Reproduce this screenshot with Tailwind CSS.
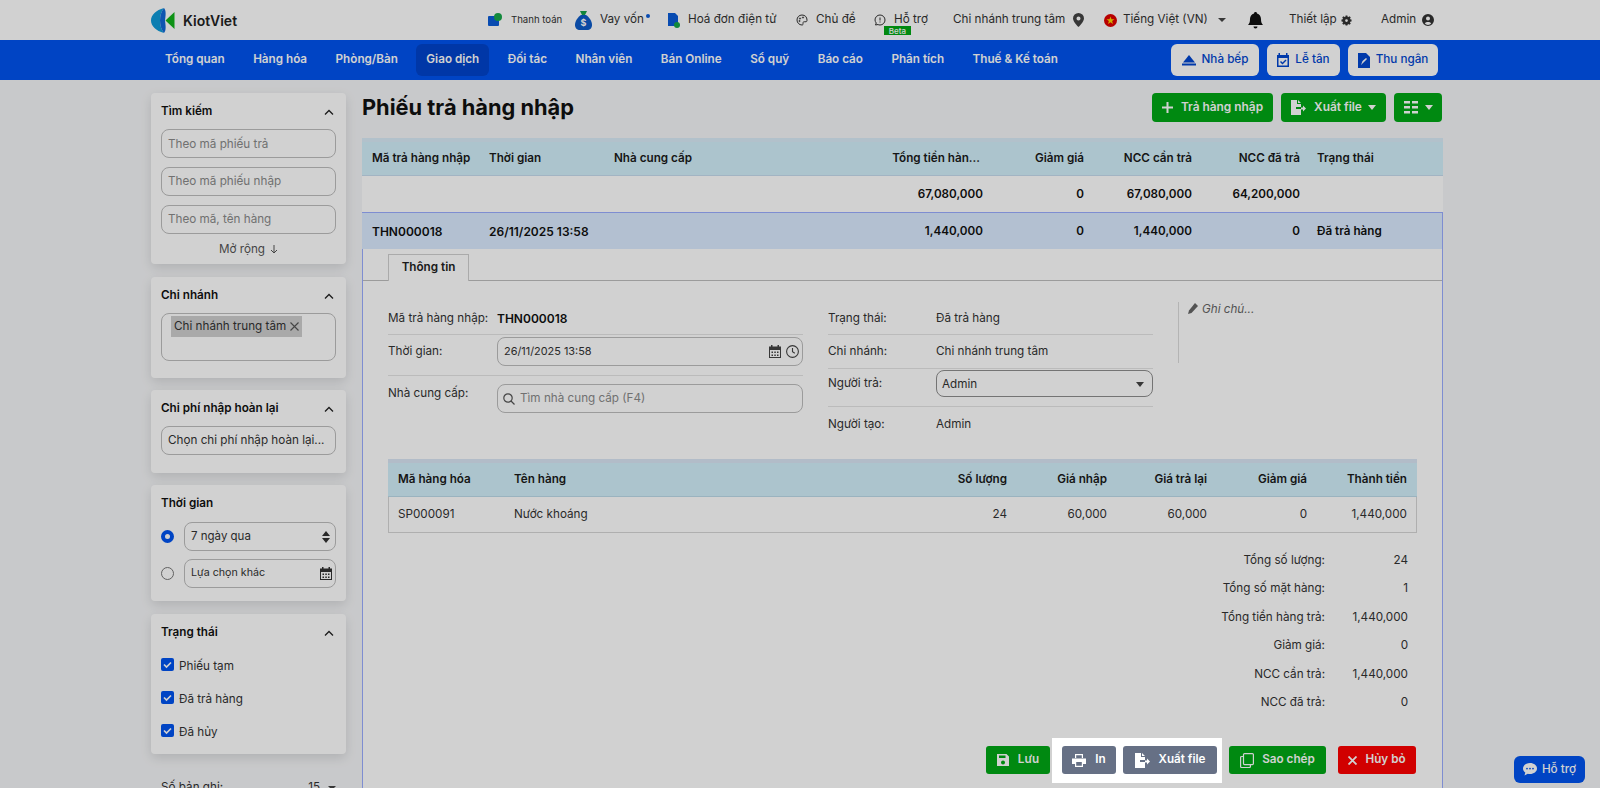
<!DOCTYPE html>
<html lang="vi">
<head>
<meta charset="utf-8">
<title>Phiếu trả hàng nhập</title>
<script src="https://cdn.jsdelivr.net/npm/@tailwindcss/browser@4"></script>
</head>
<body class="h-[788px] overflow-hidden bg-[#f5f6f8] font-['Inter','Liberation_Sans',sans-serif] text-[11.7px] text-[#222]">

<header class="flex h-10 items-center bg-white pl-[151px] text-[11.7px] text-[#333]">
  <svg class="h-[25px] w-[24px]" viewBox="0 0 24 25"><path d="M13 0C5 2 0 7 0 12.500S5 23 13 25c-2.500-3-4-7.500-4-12.500S10.500 3 13 0z" fill="#0f9ad8"/><path d="M13 0c2.500 3 1.500 8 1 12.500 .5 4.500 1.500 9.500-1 12.500-2.500-3-4-7.500-4-12.500S10.500 3 13 0z" fill="#1268d8"/><path d="M23.500 4v17L14.500 12.500z" fill="#12b31c"/></svg>
  <span class="ml-2 w-[56px] text-[14px] font-semibold text-[#222]">KiotViet</span>
  <svg class="ml-[249px] h-[14px] w-[14px]" viewBox="0 0 14 14"><rect x="0" y="3" width="11" height="10" rx="1" fill="#0a5cd8"/><circle cx="10" cy="4" r="4" fill="#17a84a"/></svg>
  <span class="ml-[9px] w-[50px] whitespace-nowrap text-[9.6px]">Thanh toán</span>
  <svg class="ml-[14px] h-[20px] w-[17px]" viewBox="0 0 17 20"><path d="M5 1h7l-2 4H7z" fill="#16a34a"/><path d="M6 5h5c3 2 6 6 6 10 0 3-2 5-5 5H5c-3 0-5-2-5-5 0-4 3-8 6-10z" fill="#0d5bc8"/><text x="8.500" y="16" text-anchor="middle" font-size="9" font-weight="700" fill="#fff">$</text></svg>
  <span class="ml-2 w-[44px] whitespace-nowrap">Vay vốn</span>
  <span class="mb-2 ml-[2px] h-1 w-1 rounded-full bg-[#0a5cd8]"></span>
  <svg class="ml-[17px] h-[15px] w-[13px]" viewBox="0 0 13 15"><path d="M1 0h7l3 3v10H1z" fill="#0a5cd8"/><circle cx="10" cy="12" r="3" fill="#17a84a"/></svg>
  <span class="ml-2 w-[88px] whitespace-nowrap">Hoá đơn điện tử</span>
  <svg class="ml-[20px] h-[12px] w-[12px]" viewBox="0 0 24 24" fill="none" stroke="#333" stroke-width="2"><path d="M12 2C6 2 2 6.500 2 12s4.500 10 10 10c2 0 2.500-1.500 2-3-.5-2 .5-3.500 2.500-3.500H20c1.500 0 2-1.500 2-3.500C22 6 18 2 12 2z"/><circle cx="8" cy="9" r="1.200"/><circle cx="14" cy="7" r="1.200"/><circle cx="7" cy="14" r="1.200"/></svg>
  <span class="ml-2 w-[39px] whitespace-nowrap">Chủ đề</span>
  <svg class="ml-[19px] h-[12px] w-[12px]" viewBox="0 0 24 24" fill="none" stroke="#333" stroke-width="2"><path d="M12 2a10 10 0 0 1 0 20c-2 0-3-.5-4-1l-5 1 1.500-4C3 16 2 14 2 12A10 10 0 0 1 12 2z"/><path d="M12 7v6M12 15v2"/></svg>
  <span class="relative ml-2 w-[35px] whitespace-nowrap">Hỗ trợ<span class="absolute left-[-10px] top-[15px] flex h-[9px] w-[27px] items-center justify-center bg-[#00a815] text-[8px] font-medium text-white">Beta</span></span>
  <span class="ml-[24px] w-[112px] whitespace-nowrap">Chi nhánh trung tâm</span>
  <svg class="ml-2 h-[14px] w-[11px]" viewBox="0 0 11 14"><path fill-rule="evenodd" d="M5.500 0A5.500 5.500 0 0 1 11 5.500C11 9 5.500 14 5.500 14S0 9 0 5.500A5.500 5.500 0 0 1 5.500 0zm0 3.500a2 2 0 1 0 0 4 2 2 0 0 0 0-4z" fill="#444"/></svg>
  <svg class="ml-[20px] h-[13px] w-[13px]" viewBox="0 0 13 13"><circle cx="6.500" cy="6.500" r="6.500" fill="#e00000"/><path d="M6.500 2.500l1 2.800h3L8.100 7l.9 3-2.500-1.800L4 10l.9-3-2.400-1.700h3z" fill="#ffd400"/></svg>
  <span class="ml-[6px] w-[84px] whitespace-nowrap">Tiếng Việt (VN)</span>
  <span class="ml-[11px] h-0 w-0 border-x-[4px] border-t-[4px] border-x-transparent border-t-[#444]"></span>
  <svg class="ml-[22px] h-[17px] w-[15px]" viewBox="0 0 15 17"><path d="M7.500 0c1 0 1.500.7 1.500 1.500C11.500 2.200 13 4.500 13 7c0 3 .5 4.500 2 6H0c1.500-1.500 2-3 2-6 0-2.500 1.500-4.800 4-5.500C6 .7 6.500 0 7.500 0zM5.500 14.500h4a2 2 0 0 1-4 0z" fill="#111"/></svg>
  <span class="ml-[26px] w-[47px] whitespace-nowrap">Thiết lập</span>
  <svg class="ml-[5px] h-[11px] w-[11px]" viewBox="0 0 24 24" fill="none" stroke="#333" stroke-width="6"><circle cx="12" cy="12" r="6"/><path stroke-width="4" d="M12 1v4M12 19v4M1 12h4M19 12h4M4 4l3 3M17 17l3 3M4 20l3-3M17 7l3-3"/></svg>
  <span class="ml-[29px] w-[35px] whitespace-nowrap">Admin</span>
  <svg class="ml-[6px] h-[12px] w-[12px]" viewBox="0 0 12 12"><path fill-rule="evenodd" d="M6 0a6 6 0 1 1 0 12A6 6 0 0 1 6 0zm0 2.500a2 2 0 1 0 0 4 2 2 0 0 0 0-4zM2.800 9.300C3.600 10.400 4.700 11 6 11s2.400-.6 3.200-1.700C8.500 8.400 7.400 8 6 8s-2.500.4-3.200 1.300z" fill="#333"/></svg>
</header>

<nav class="flex h-10 items-center gap-[8.5px] bg-[#0054f0] pl-[155px] font-semibold text-white">
  <span class="whitespace-nowrap rounded-md px-[10px] py-2">Tổng quan</span>
  <span class="whitespace-nowrap rounded-md px-[10px] py-2">Hàng hóa</span>
  <span class="whitespace-nowrap rounded-md px-[10px] py-2">Phòng/Bàn</span>
  <span class="flex h-8 items-center whitespace-nowrap rounded-md bg-[#0044cc] px-[10px]">Giao dịch</span>
  <span class="whitespace-nowrap rounded-md px-[10px] py-2">Đối tác</span>
  <span class="whitespace-nowrap rounded-md px-[10px] py-2">Nhân viên</span>
  <span class="whitespace-nowrap rounded-md px-[10px] py-2">Bán Online</span>
  <span class="whitespace-nowrap rounded-md px-[10px] py-2">Sổ quỹ</span>
  <span class="whitespace-nowrap rounded-md px-[10px] py-2">Báo cáo</span>
  <span class="whitespace-nowrap rounded-md px-[10px] py-2">Phân tích</span>
  <span class="whitespace-nowrap rounded-md px-[10px] py-2">Thuế &amp; Kế toán</span>
  <div class="ml-auto mr-[162px] flex gap-2 font-medium text-[#0046d0]">
    <span class="flex h-8 w-[88px] items-center justify-center gap-[6px] rounded-md bg-white">
      <svg class="h-[11px] w-[14px]" viewBox="0 0 14 11" fill="#0046d0"><path d="M7 0l6 7.500H1z"/><rect y="8.500" width="14" height="2"/></svg>Nhà bếp</span>
    <span class="flex h-8 w-[73px] items-center justify-center gap-[6px] rounded-md bg-white">
      <svg class="h-[14px] w-[12px]" viewBox="0 0 12 14" fill="#0046d0"><path fill-rule="evenodd" d="M3 0v2h6V0h1.500v2H12v12H0V2h1.500V0zM1.500 5v7.500h9V5zM8.500 6.500l1 1-4 4-2.500-2.500 1-1 1.500 1.500z"/></svg>Lễ tân</span>
    <span class="flex h-8 w-[90px] items-center justify-center gap-[6px] rounded-md bg-white">
      <svg class="h-[15px] w-[12px]" viewBox="0 0 12 15" fill="#0046d0"><path fill-rule="evenodd" d="M0 0h8l4 4v11H0zM3 12l1.500-4L8 5l1 1-3.500 3.500z"/></svg>Thu ngân</span>
  </div>
</nav>

<div class="flex pl-[151px] pt-[13px]">
  <aside class="w-[195px] shrink-0">
    <section class="h-[171px] rounded-[4px] bg-white px-[10px] pt-[11px] shadow-[0_4px_12px_rgba(0,0,0,0.12)]">
      <div class="flex h-[15px] items-center justify-between pr-[2px] pt-[1px] font-semibold text-[#111]">Tìm kiếm
        <svg class="h-[9px] w-[10px]" viewBox="0 0 10 9" fill="none" stroke="#222" stroke-width="1.300"><path d="M1 6.500l4-4 4 4"/></svg></div>
      <div class="mt-[10px] flex h-[29px] items-center rounded-lg border border-[#bdbdbd] px-[6px] pt-[2px] text-[#8a8a8a]">Theo mã phiếu trả</div>
      <div class="mt-[9px] flex h-[29px] items-center rounded-lg border border-[#bdbdbd] px-[6px] pt-[1px] text-[#8a8a8a]">Theo mã phiếu nhập</div>
      <div class="mt-[9px] flex h-[29px] items-center rounded-lg border border-[#bdbdbd] px-[6px] pt-[1px] text-[#8a8a8a]">Theo mã, tên hàng</div>
      <div class="mt-[7px] flex items-center justify-center gap-[5px] text-[#555]">Mở rộng
        <svg class="h-[9px] w-[8px]" viewBox="0 0 8 9" fill="none" stroke="#555"><path d="M4 0v8M1 5l3 3 3-3"/></svg></div>
    </section>

    <section class="mt-[13px] h-[101px] rounded-[4px] bg-white px-[10px] pt-[11px] shadow-[0_4px_12px_rgba(0,0,0,0.12)]">
      <div class="flex h-[15px] items-center justify-between pr-[2px] pt-[1px] font-semibold text-[#111]">Chi nhánh
        <svg class="h-[9px] w-[10px]" viewBox="0 0 10 9" fill="none" stroke="#222" stroke-width="1.300"><path d="M1 6.500l4-4 4 4"/></svg></div>
      <div class="mt-[10px] h-[48px] rounded-lg border border-[#bdbdbd] pl-[9px] pt-[2px]">
        <span class="inline-flex h-[21px] items-center gap-[4px] bg-[#cfcfcf] px-[3px] text-[#333]">Chi nhánh trung tâm
          <svg class="h-[9px] w-[9px]" viewBox="0 0 9 9" stroke="#555" stroke-width="1.100"><path d="M.5.500l8 8M8.500.500l-8 8"/></svg></span>
      </div>
    </section>

    <section class="mt-[12px] h-[83px] rounded-[4px] bg-white px-[10px] pt-[11px] shadow-[0_4px_12px_rgba(0,0,0,0.12)]">
      <div class="flex h-[15px] items-center justify-between pr-[2px] pt-[1px] font-semibold text-[#111]">Chi phí nhập hoàn lại
        <svg class="h-[9px] w-[10px]" viewBox="0 0 10 9" fill="none" stroke="#222" stroke-width="1.300"><path d="M1 6.500l4-4 4 4"/></svg></div>
      <div class="mt-[10px] flex h-[29px] items-center whitespace-nowrap rounded-lg border border-[#bdbdbd] px-[6px] text-[#333]">Chọn chi phí nhập hoàn lại...</div>
    </section>

    <section class="mt-[12px] h-[116px] rounded-[4px] bg-white px-[10px] pt-[11px] shadow-[0_4px_12px_rgba(0,0,0,0.12)]">
      <div class="flex h-[15px] items-center pt-[1px] font-semibold text-[#111]">Thời gian</div>
      <div class="mt-[11px] flex items-center">
        <span class="h-[13px] w-[13px] rounded-full border-[4px] border-[#0054f0] bg-white"></span>
        <div class="ml-[10px] flex h-[29px] flex-1 items-center justify-between rounded-lg border border-[#bdbdbd] pl-[6px] pr-[5px] text-[#333] text-[11.5px]">7 ngày qua
          <svg class="h-[12px] w-[8px]" viewBox="0 0 8 12" fill="#333"><path d="M4 0l4 5H0zM4 12L0 7h8z"/></svg></div>
      </div>
      <div class="mt-[8px] flex items-center">
        <span class="h-[13px] w-[13px] rounded-full border border-[#777] bg-white"></span>
        <div class="ml-[10px] flex h-[29px] flex-1 items-center justify-between rounded-lg border border-[#bdbdbd] pl-[6px] pr-[3px] text-[#333] text-[10.7px]">Lựa chọn khác
          <svg class="h-[13px] w-[12px]" viewBox="0 0 12 13" fill="#333"><path fill-rule="evenodd" d="M2 0h1.500v1.500h5V0H10v1.500h2V13H0V1.500h2zM1 5v7h10V5zM2.500 6.500h1.500V8H2.500zM5.300 6.500h1.500V8H5.300zM8 6.500h1.500V8H8zM2.500 9.500h1.500V11H2.500zM5.300 9.500h1.500V11H5.300zM8 9.500h1.500V11H8z"/></svg></div>
      </div>
    </section>

    <section class="mt-[13px] h-[140px] rounded-[4px] bg-white px-[10px] pt-[11px] shadow-[0_4px_12px_rgba(0,0,0,0.12)]">
      <div class="flex h-[15px] items-center justify-between pr-[2px] pt-[1px] font-semibold text-[#111]">Trạng thái
        <svg class="h-[9px] w-[10px]" viewBox="0 0 10 9" fill="none" stroke="#222" stroke-width="1.300"><path d="M1 6.500l4-4 4 4"/></svg></div>
      <div class="mt-[17px] flex h-[14px] items-center gap-[5px] text-[#333]">
        <svg class="h-[13px] w-[13px]" viewBox="0 0 13 13"><rect width="13" height="13" rx="2" fill="#0054f0"/><path d="M3 6.500l2.500 2.500 4.500-4.500" fill="none" stroke="#fff" stroke-width="1.700"/></svg><span class="mt-[6px]">Phiếu tạm</span></div>
      <div class="mt-[19px] flex h-[14px] items-center gap-[5px] text-[#333]">
        <svg class="h-[13px] w-[13px]" viewBox="0 0 13 13"><rect width="13" height="13" rx="2" fill="#0054f0"/><path d="M3 6.500l2.500 2.500 4.500-4.500" fill="none" stroke="#fff" stroke-width="1.700"/></svg><span class="mt-[6px]">Đã trả hàng</span></div>
      <div class="mt-[19px] flex h-[14px] items-center gap-[5px] text-[#333]">
        <svg class="h-[13px] w-[13px]" viewBox="0 0 13 13"><rect width="13" height="13" rx="2" fill="#0054f0"/><path d="M3 6.500l2.500 2.500 4.500-4.500" fill="none" stroke="#fff" stroke-width="1.700"/></svg><span class="mt-[6px]">Đã hủy</span></div>
    </section>

    <div class="mt-[25px] flex justify-between px-[10px] text-[#333]">Số bản ghi:<span class="flex items-center gap-2">15<span class="h-0 w-0 border-x-[4px] border-t-[4px] border-x-transparent border-t-[#444]"></span></span></div>
  </aside>

  <main class="ml-4 w-[1081px]">
    <div class="flex h-7 items-center justify-between">
      <h1 class="text-[21.8px] font-bold text-[#111]">Phiếu trả hàng nhập</h1>
      <div class="mr-px flex gap-2 font-semibold text-[11.9px] text-white">
        <span class="flex h-[29px] w-[121px] items-center justify-center gap-2 rounded-[4px] bg-[#00a815]">
          <svg class="h-[11px] w-[11px]" viewBox="0 0 11 11" fill="#fff"><path d="M4.500 0h2v4.500H11v2H6.500V11h-2V6.500H0v-2h4.500z"/></svg>Trả hàng nhập</span>
        <span class="flex h-[29px] w-[105px] items-center justify-center gap-[8px] rounded-[4px] bg-[#00a815]">
          <svg class="h-[15px] w-[15px]" viewBox="0 0 15 15" fill="#fff"><path d="M0 0h6v4h4v3H5v2h5v6H0zM7 0l3 3H7zM10 7.500h2V5.500l3 3-3 3v-2h-2z"/></svg>Xuất file
          <span class="-ml-[2px] h-0 w-0 border-x-[4px] border-t-[5px] border-x-transparent border-t-white"></span></span>
        <span class="flex h-[29px] w-[48px] items-center justify-center gap-[7px] rounded-[4px] bg-[#00a815]">
          <svg class="h-[13px] w-[14px]" viewBox="0 0 14 13" fill="#fff"><path d="M0 0h6v2.500H0zM8 0h6v2.500H8zM0 5h6v2.500H0zM8 5h6v2.500H8zM0 10h6v2.500H0zM8 10h6v2.500H8z"/></svg>
          <span class="h-0 w-0 border-x-[4px] border-t-[5px] border-x-transparent border-t-white"></span></span>
      </div>
    </div>

    <div class="mt-[17px] grid h-[38px] grid-cols-[117px_125px_268px_101px_101px_108px_108px_1fr] items-center border-b border-t-[4px] border-b-[#c6dcee] border-t-[#d9ecf8] bg-[#d2f0fa] pl-[10px] font-semibold text-[#1a1a1a]">
      <span class="whitespace-nowrap">Mã trả hàng nhập</span><span>Thời gian</span><span>Nhà cung cấp</span>
      <span class="whitespace-nowrap pr-[3px] text-right">Tổng tiền hàn...</span><span class="text-right">Giảm giá</span><span class="text-right">NCC cần trả</span><span class="text-right">NCC đã trả</span><span class="pl-[17px]">Trạng thái</span>
    </div>
    <div class="grid h-[36px] grid-cols-[117px_125px_268px_101px_101px_108px_108px_1fr] items-center bg-white pl-[10px] pt-[1px] font-semibold text-[#111]">
      <span></span><span></span><span></span><span class="text-right">67,080,000</span><span class="text-right">0</span><span class="text-right">67,080,000</span><span class="text-right">64,200,000</span><span></span>
    </div>

    <div class="h-[600px] border border-[#9aadff] bg-white">
      <div class="-ml-px grid h-[36px] grid-cols-[117px_125px_268px_101px_101px_108px_108px_1fr] items-center bg-[#dbebff] pl-[10px] pt-[1px] font-semibold text-[#111]">
        <span class="text-[12px]">THN000018</span><span class="whitespace-nowrap text-[12px]">26/11/2025 13:58</span><span></span><span class="text-right">1,440,000</span><span class="text-right">0</span><span class="text-right">1,440,000</span><span class="text-right">0</span><span class="pl-[17px]">Đã trả hàng</span>
      </div>

      <div class="flex h-[32px] items-end border-b border-[#bdbdbd] pl-[25px]">
        <span class="-mb-px flex h-[27px] w-[81px] items-center justify-center border border-b-0 border-[#d0d0d0] bg-white font-semibold text-[#222]">Thông tin</span>
      </div>

      <div class="flex h-[178px] pl-[25px] pt-[21px] text-[#333]">
        <div class="w-[415px]">
          <div class="flex h-[33px] items-center border-b border-[#e4e4e4] pt-[1px]"><span class="w-[109px] whitespace-nowrap">Mã trả hàng nhập:</span><span class="font-semibold text-[12px] text-[#111]">THN000018</span></div>
          <div class="flex h-[41px] items-start border-b border-[#e4e4e4] pt-[2px]"><span class="flex h-[29px] w-[109px] items-center">Thời gian:</span>
            <div class="flex h-[29px] flex-1 items-center justify-between rounded-lg border border-[#bdbdbd] pl-[6px] pr-[3px] text-[10.9px]">26/11/2025 13:58
              <span class="flex items-center gap-[5px]">
                <svg class="h-[13px] w-[12px]" viewBox="0 0 12 13" fill="#444"><path fill-rule="evenodd" d="M2 0h1.500v1.500h5V0H10v1.500h2V13H0V1.500h2zM1 5v7h10V5zM2.500 6.500h1.500V8H2.500zM5.300 6.500h1.500V8H5.300zM8 6.500h1.500V8H8zM2.500 9.500h1.500V11H2.500zM5.300 9.500h1.500V11H5.300zM8 9.500h1.500V11H8z"/></svg>
                <svg class="h-[13px] w-[13px]" viewBox="0 0 13 13" fill="none" stroke="#444" stroke-width="1.100"><circle cx="6.500" cy="6.500" r="5.900"/><path d="M6.500 3v3.700l2.300 1.500"/></svg>
              </span></div>
          </div>
          <div class="flex items-start pt-[8px]"><span class="w-[109px] pt-[1px]">Nhà cung cấp:</span>
            <div class="flex h-[29px] flex-1 items-center gap-[5px] rounded-lg border border-[#bdbdbd] pl-[5px] text-[#8a8a8a] text-[11.7px]">
              <svg class="h-[12px] w-[12px]" viewBox="0 0 12 12" fill="none" stroke="#555" stroke-width="1.200"><circle cx="5" cy="5" r="4.200"/><path d="M8 8l3.500 3.500"/></svg>Tìm nhà cung cấp (F4)</div>
          </div>
        </div>

        <div class="ml-[25px] w-[325px]">
          <div class="flex h-[33px] items-center border-b border-[#e4e4e4] pt-[1px]"><span class="w-[108px]">Trạng thái:</span>Đã trả hàng</div>
          <div class="flex h-[34px] items-center border-b border-[#e4e4e4]"><span class="w-[108px]">Chi nhánh:</span>Chi nhánh trung tâm</div>
          <div class="flex h-[38px] items-start border-b border-[#e4e4e4] pt-[1px]"><span class="flex h-[27px] w-[108px] items-center">Người trả:</span>
            <div class="flex h-[27px] flex-1 items-center justify-between rounded-lg border border-[#8e8e8e] pl-[5px] pr-[8px] pt-[2px]">Admin<span class="h-0 w-0 border-x-[4px] border-t-[5px] border-x-transparent border-t-[#444]"></span></div>
          </div>
          <div class="flex h-[35px] items-center"><span class="w-[108px]">Người tạo:</span>Admin</div>
        </div>

        <div class="ml-[25px] flex h-[61px] items-start gap-[4px] border-l border-[#dcdcdc] pl-[9px] italic leading-[14px] text-[#666]">
          <svg class="mt-[1px] h-[11px] w-[10px]" viewBox="0 0 10 11" fill="#666"><path d="M7 0l3 3-6.500 7L0 11l1-3.500z"/></svg>Ghi chú...</div>
      </div>

      <div class="ml-[25px] w-[1029px] border-b border-x border-[#d6d6d6]">
        <div class="-mx-px grid h-[38px] grid-cols-[116px_1fr_100px_100px_100px_100px_100px] items-center border-b border-t-[4px] border-b-[#bcdbe9] border-t-[#d9e6f5] bg-[#d2f0fa] px-[10px] font-semibold text-[#1a1a1a]">
          <span>Mã hàng hóa</span><span>Tên hàng</span><span class="text-right">Số lượng</span><span class="text-right">Giá nhập</span><span class="text-right">Giá trả lại</span><span class="text-right">Giảm giá</span><span class="text-right">Thành tiền</span>
        </div>
        <div class="grid h-[35px] grid-cols-[116px_1fr_100px_100px_100px_100px_100px] items-center px-[9px] pt-[1px] text-[#333]">
          <span>SP000091</span><span>Nước khoáng</span><span class="text-right">24</span><span class="text-right">60,000</span><span class="text-right">60,000</span><span class="text-right">0</span><span class="text-right">1,440,000</span>
        </div>
      </div>

      <div class="ml-[25px] mt-[13px] w-[1020px] text-[#333]">
        <div class="flex h-[28.6px] items-center justify-end"><span>Tổng số lượng:</span><span class="w-[83px] text-right">24</span></div>
        <div class="flex h-[28.6px] items-center justify-end"><span>Tổng số mặt hàng:</span><span class="w-[83px] text-right">1</span></div>
        <div class="flex h-[28.6px] items-center justify-end"><span>Tổng tiền hàng trả:</span><span class="w-[83px] text-right">1,440,000</span></div>
        <div class="flex h-[28.6px] items-center justify-end"><span>Giảm giá:</span><span class="w-[83px] text-right">0</span></div>
        <div class="flex h-[28.6px] items-center justify-end"><span>NCC cần trả:</span><span class="w-[83px] text-right">1,440,000</span></div>
        <div class="flex h-[28.6px] items-center justify-end"><span>NCC đã trả:</span><span class="w-[83px] text-right">0</span></div>
      </div>

      <div class="ml-[623px] mt-[20px] flex items-center font-semibold text-white">
        <span class="flex h-7 w-16 items-center justify-center gap-[9px] rounded-[3px] bg-[#00a815]">
          <svg class="h-[12px] w-[12px]" viewBox="0 0 12 12" fill="#fff"><path fill-rule="evenodd" d="M0 0h9.500L12 2.500V12H0zM2 1.500V4h6.500V1.500zM6 6.500a2 2 0 1 0 0 4 2 2 0 0 0 0-4z"/></svg>Lưu</span>
        <div class="relative z-20 ml-[2px] flex h-[45px] w-[170px] items-center gap-[7px] bg-white pl-[10px]">
          <span class="flex h-7 w-[54px] items-center justify-center gap-[9px] rounded-[3px] bg-[#667085]">
            <svg class="h-[13px] w-[14px]" viewBox="0 0 14 13" fill="#fff"><path fill-rule="evenodd" d="M3 0h8v4H9.800V1.200H4.200V4H3zM0 4.500h14V10h-3v3H3v-3H0zM4.200 8v3.800h5.600V8z"/></svg>In</span>
          <span class="flex h-7 w-[94px] items-center justify-center gap-[9px] rounded-[3px] bg-[#667085]">
            <svg class="h-[15px] w-[15px]" viewBox="0 0 15 15" fill="#fff"><path d="M0 0h6v4h4v3H5v2h5v6H0zM7 0l3 3H7zM10 7.500h2V5.500l3 3-3 3v-2h-2z"/></svg>Xuất file</span>
        </div>
        <span class="ml-[7px] flex h-7 w-[97px] items-center justify-center gap-[8px] rounded-[3px] bg-[#00a815]">
          <svg class="h-[15px] w-[14px]" viewBox="0 0 14 15" fill="none" stroke="#fff" stroke-width="1.200"><rect x="3.500" y=".6" width="9.900" height="11" rx="1"/><path d="M3.500 3.500H1.600a1 1 0 0 0-1 1v9a1 1 0 0 0 1 1h7.800a1 1 0 0 0 1-1v-1.900"/></svg>Sao chép</span>
        <span class="ml-[12px] flex h-7 w-[78px] items-center justify-center gap-[8px] rounded-[3px] bg-[#ff0000]">
          <svg class="h-[9px] w-[9px]" viewBox="0 0 9 9" stroke="#fff" stroke-width="1.800"><path d="M.5.500l8 8M8.500.500l-8 8"/></svg>Hủy bỏ</span>
      </div>
    </div>
  </main>
</div>

<div class="absolute left-[1514px] top-[756px] flex h-[27px] w-[71px] items-center justify-center gap-[5px] rounded-md bg-[#0054f0] font-medium text-white">
  <svg class="h-[13px] w-[14px]" viewBox="0 0 14 13" fill="#fff"><path fill-rule="evenodd" d="M7 0c3.900 0 7 2.400 7 5.500S10.900 11 7 11c-.8 0-1.500-.1-2.200-.3L1.500 12.500l.8-3C.9 8.500 0 7.100 0 5.500 0 2.400 3.100 0 7 0zM4 4.700a.9.900 0 1 0 0 1.800.9.900 0 0 0 0-1.800zm3 0a.9.900 0 1 0 0 1.800.9.900 0 0 0 0-1.800zm3 0a.9.900 0 1 0 0 1.800.9.900 0 0 0 0-1.800z"/></svg>Hỗ trợ</div>

<div class="fixed inset-0 z-10 bg-black/[0.18]"></div>
</body>
</html>
